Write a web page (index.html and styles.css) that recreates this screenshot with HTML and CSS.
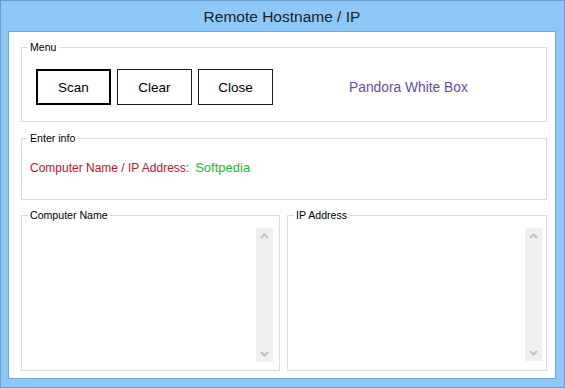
FILE: index.html
```html
<!DOCTYPE html>
<html>
<head>
<meta charset="utf-8">
<link rel="stylesheet" href="styles.css">
</head>
<body>
<div class="window">
  <div class="titlebar">Remote Hostname / IP</div>
  <div class="client">
    <div class="group menu">
      <span class="group-label">Menu</span>
      <button class="btn btn-default">Scan</button>
      <button class="btn">Clear</button>
      <button class="btn">Close</button>
      <span class="brand">Pandora White Box</span>
    </div>
    <div class="group info">
      <span class="group-label">Enter info</span>
      <span class="info-label">Computer Name / IP Address:</span>
      <span class="info-value">Softpedia</span>
    </div>
    <div class="lists">
      <div class="group list-group left">
        <span class="group-label">Computer Name</span>
        <div class="listbox">
          <div class="scrollbar">
            <svg class="arrow" width="17" height="17" viewBox="0 0 17 17"><polyline points="5,10 8.5,6.5 12,10" fill="none" stroke="#c2c2c2" stroke-width="2"/></svg>
            <svg class="arrow" width="17" height="17" viewBox="0 0 17 17"><polyline points="5,7 8.5,10.5 12,7" fill="none" stroke="#c2c2c2" stroke-width="2"/></svg>
          </div>
        </div>
      </div>
      <div class="group list-group right">
        <span class="group-label">IP Address</span>
        <div class="listbox">
          <div class="scrollbar">
            <svg class="arrow" width="17" height="17" viewBox="0 0 17 17"><polyline points="5,10 8.5,6.5 12,10" fill="none" stroke="#c2c2c2" stroke-width="2"/></svg>
            <svg class="arrow" width="17" height="17" viewBox="0 0 17 17"><polyline points="5,7 8.5,10.5 12,7" fill="none" stroke="#c2c2c2" stroke-width="2"/></svg>
          </div>
        </div>
      </div>
    </div>
  </div>
</div>
</body>
</html>
```
FILE: styles.css
```css
html, body {
  margin: 0;
  padding: 0;
  background: #8dc8f9;
}
body {
  font-family: "Liberation Sans", Arial, sans-serif;
}
.window {
  width: 565px;
  height: 388px;
  box-sizing: border-box;
  border: 1px solid #6b9ed0;
  background: #8dc8f9;
  padding: 0 8px 8px 7px;
  display: flex;
  flex-direction: column;
}
.titlebar {
  height: 30px;
  display: flex;
  align-items: center;
  justify-content: center;
  font-size: 15.5px;
  color: #222;
  padding-top: 1px;
  box-sizing: border-box;
}
.client {
  flex: 1;
  background: #fff;
  border: 1px solid #74a6d6;
  padding: 15px 8px 7px 12px;
  display: flex;
  flex-direction: column;
}
.group {
  position: relative;
  border: 1px solid #dcdcdc;
  box-sizing: border-box;
}
.group-label {
  position: absolute;
  top: -7px;
  left: 6px;
  padding: 0 2px 0 2px;
  background: #fff;
  font-size: 10.6px;
  line-height: 13px;
  color: #000;
}
.menu {
  height: 75px;
  display: flex;
  align-items: flex-start;
  padding: 21px 0 0 14px;
  gap: 6px;
}
.btn {
  width: 75px;
  height: 36px;
  box-sizing: border-box;
  border: 1px solid #1a1a1a;
  background: #fff;
  font-family: "Liberation Sans", Arial, sans-serif;
  font-size: 13.5px;
  color: #000;
  padding: 0;
  margin: 0;
}
.btn-default {
  border: 2px solid #000;
}
.brand {
  margin-left: 70px;
  margin-top: 11px;
  font-size: 13.8px;
  color: #6a4ca2;
}
.info {
  margin-top: 16px;
  height: 62px;
  display: flex;
  align-items: baseline;
  padding: 21px 0 0 8px;
  gap: 6px;
}
.info-label {
  font-size: 12px;
  color: #c8102e;
}
.info-value {
  font-size: 13px;
  color: #12c21e;
}
.lists {
  margin-top: 15px;
  height: 156px;
  display: grid;
  grid-template-columns: 259px 1fr;
  gap: 7px;
}
.list-group {
  display: flex;
  padding: 12px 6px 8px 6px;
}
.list-group.right {
  padding: 12px 4px 9px 6px;
}
.listbox {
  flex: 1;
  display: flex;
  justify-content: flex-end;
  background: #fff;
}
.scrollbar {
  width: 17px;
  background: #f0f0f0;
  display: flex;
  flex-direction: column;
  justify-content: space-between;
}
.arrow {
  display: block;
}
```
